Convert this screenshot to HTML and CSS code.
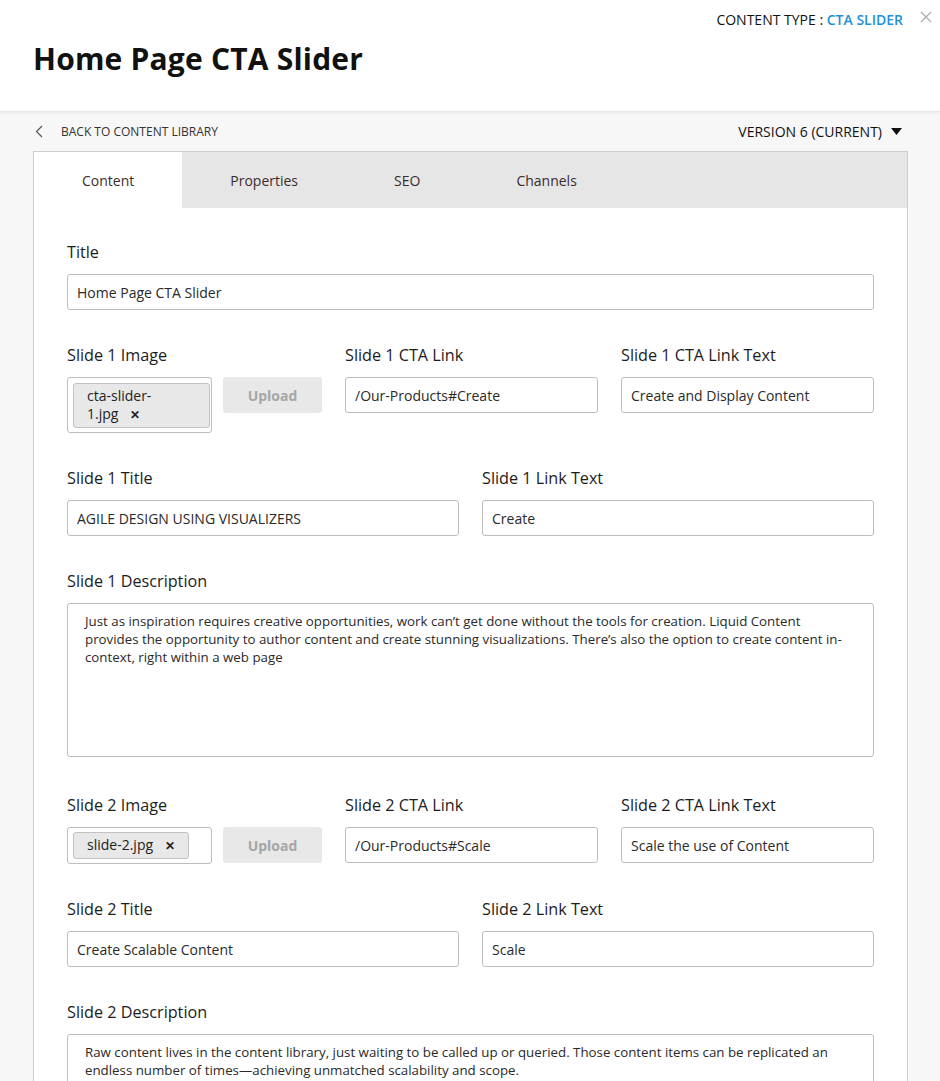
FILE: index.html
```html
<!DOCTYPE html>
<html lang="en">
<head>
  <meta charset="UTF-8">
  <title>Home Page CTA Slider</title>
  <meta name="viewport" content="width=device-width, initial-scale=1">
  <link rel="stylesheet" href="styles.css">
</head>
<body>

  <header class="top">
    <div class="meta">
      <span class="type">CONTENT TYPE : <a href="#">CTA SLIDER</a></span>
      <button class="close" aria-label="Close">
        <svg width="12" height="12" viewBox="0 0 12 12"><path d="M1 1L11 11M11 1L1 11" stroke="#a8a8a8" stroke-width="1.1" fill="none"/></svg>
      </button>
    </div>
    <h1>Home Page CTA Slider</h1>
  </header>

  <main class="editor">
    <div class="toolbar">
      <a class="back" href="#">
        <svg width="8" height="13" viewBox="0 0 8 13"><path d="M7 1L1.5 6.5L7 12" stroke="#555" stroke-width="1.2" fill="none"/></svg>
        BACK TO CONTENT LIBRARY
      </a>
      <div class="version">
        VERSION 6 (CURRENT)
        <svg width="11" height="7" viewBox="0 0 11 7"><path d="M0 0H11L5.5 7Z" fill="#111"/></svg>
      </div>
    </div>

    <section class="panel">
      <nav class="tabs">
        <a class="tab active" href="#">Content</a>
        <a class="tab" href="#">Properties</a>
        <a class="tab" href="#">SEO</a>
        <a class="tab" href="#">Channels</a>
      </nav>

      <form class="form">
        <div class="field">
          <label>Title</label>
          <input type="text" value="Home Page CTA Slider">
        </div>

        <div class="row three">
          <div class="field">
            <label>Slide 1 Image</label>
            <div class="image-field">
              <div class="file-box tall"><span class="chip wrap">cta-slider-<br>1.jpg <b>&#x2715;</b></span></div>
              <button type="button" class="upload">Upload</button>
            </div>
          </div>
          <div class="field">
            <label>Slide 1 CTA Link</label>
            <input type="text" value="/Our-Products#Create">
          </div>
          <div class="field">
            <label>Slide 1 CTA Link Text</label>
            <input type="text" value="Create and Display Content">
          </div>
        </div>

        <div class="row two">
          <div class="field">
            <label>Slide 1 Title</label>
            <input type="text" value="AGILE DESIGN USING VISUALIZERS">
          </div>
          <div class="field">
            <label>Slide 1 Link Text</label>
            <input type="text" value="Create">
          </div>
        </div>

        <div class="field desc">
          <label>Slide 1 Description</label>
          <textarea>Just as inspiration requires creative opportunities, work can’t get done without the tools for creation. Liquid Content provides the opportunity to author content and create stunning visualizations. There’s also the option to create content in-context, right within a web page</textarea>
        </div>

        <div class="row three">
          <div class="field">
            <label>Slide 2 Image</label>
            <div class="image-field">
              <div class="file-box"><span class="chip">slide-2.jpg <b>&#x2715;</b></span></div>
              <button type="button" class="upload">Upload</button>
            </div>
          </div>
          <div class="field">
            <label>Slide 2 CTA Link</label>
            <input type="text" value="/Our-Products#Scale">
          </div>
          <div class="field">
            <label>Slide 2 CTA Link Text</label>
            <input type="text" value="Scale the use of Content">
          </div>
        </div>

        <div class="row two">
          <div class="field">
            <label>Slide 2 Title</label>
            <input type="text" value="Create Scalable Content">
          </div>
          <div class="field">
            <label>Slide 2 Link Text</label>
            <input type="text" value="Scale">
          </div>
        </div>

        <div class="field desc">
          <label>Slide 2 Description</label>
          <textarea>Raw content lives in the content library, just waiting to be called up or queried. Those content items can be replicated an endless number of times—achieving unmatched scalability and scope.</textarea>
        </div>
      </form>
    </section>
  </main>

</body>
</html>
```

FILE: styles.css
```css
body {
  margin: 0;
  font-family: 'Open Sans', 'Liberation Sans', sans-serif;
  background: #f7f7f7;
  color: #222;
  height: 1081px;
  overflow: hidden;
}

.top {
  background: white;
  height: 112px;
  padding: 0 8px 0 33px;
  box-sizing: border-box;
  border-bottom: 1px solid #e6e6e6;
  box-shadow: 0 1px 3px rgba(0,0,0,0.06);
}

.meta {
  display: flex;
  justify-content: flex-end;
  align-items: center;
  gap: 17px;
  height: 38px;
}

.type {
  font-size: 14px;
  color: #111;
}

.type a {
  color: #1e90d8;
  text-decoration: none;
  font-weight: 600;
}

.close {
  background: none;
  border: none;
  padding: 0;
  display: flex;
  margin-top: -4px;
}

h1 {
  margin: 3px 0 0;
  font-size: 30px;
  line-height: 36px;
  font-weight: 700;
  letter-spacing: 0.2px;
  color: #111;
}

.toolbar {
  display: flex;
  justify-content: space-between;
  align-items: center;
  height: 39px;
  margin: 0 38px 0 35px;
}

.back {
  display: flex;
  align-items: center;
  gap: 18px;
  font-size: 12px;
  color: #333;
  text-decoration: none;
}

.version {
  display: flex;
  align-items: center;
  gap: 9px;
  font-size: 14px;
  color: #111;
}

.panel {
  margin: 0 32px 0 33px;
  background: white;
  border: 1px solid #cfcfcf;
}

.tabs {
  display: flex;
  height: 56px;
  background: #e6e6e6;
}

.tab {
  display: flex;
  align-items: center;
  padding: 0 48px;
  font-size: 14px;
  color: #3b2c2c;
  text-decoration: none;
}

.tab.active {
  background: white;
}

.form {
  padding: 34px 33px 0;
}

.field {
  margin-bottom: 35px;
}

.row {
  display: grid;
  gap: 23px;
}

.row.three {
  grid-template-columns: repeat(3, 1fr);
}

.row.two {
  grid-template-columns: 1fr 1fr;
}

label {
  display: block;
  font-size: 16.2px;
  line-height: 20px;
  margin-bottom: 12px;
  color: #1c1c1c;
}

input, textarea {
  display: block;
  width: 100%;
  box-sizing: border-box;
  border: 1px solid #bdbdbd;
  border-radius: 3px;
  font-family: inherit;
  color: #2a2a2a;
  background: white;
}

input {
  height: 36px;
  padding: 0 9px;
  font-size: 14px;
}

textarea {
  height: 154px;
  padding: 8px 17px;
  font-size: 13.3px;
  line-height: 18px;
  resize: none;
}

.desc {
  margin-bottom: 38px;
}

.image-field {
  display: flex;
  align-items: flex-start;
  gap: 11px;
}

.file-box {
  width: 145px;
  min-height: 36px;
  box-sizing: border-box;
  padding: 4px 1px 4px 5px;
  border: 1px solid #bdbdbd;
  border-radius: 3px;
  display: flex;
  align-items: center;
}

.file-box.tall {
  padding: 5px 1px 4px 5px;
}

.chip {
  background: #e8e8e8;
  border: 1px solid #c2c2c2;
  border-radius: 3px;
  padding: 3px 13px;
  font-size: 14px;
  line-height: 18px;
  color: #222;
}

.chip.wrap {
  flex: 1;
}

.chip b {
  margin-left: 8px;
  font-size: 12px;
  line-height: 18px;
}

.upload {
  width: 99px;
  height: 36px;
  border: none;
  border-radius: 3px;
  background: #e8e8e8;
  color: #a6a6a6;
  font-family: inherit;
  font-size: 14px;
  font-weight: 700;
}
```
